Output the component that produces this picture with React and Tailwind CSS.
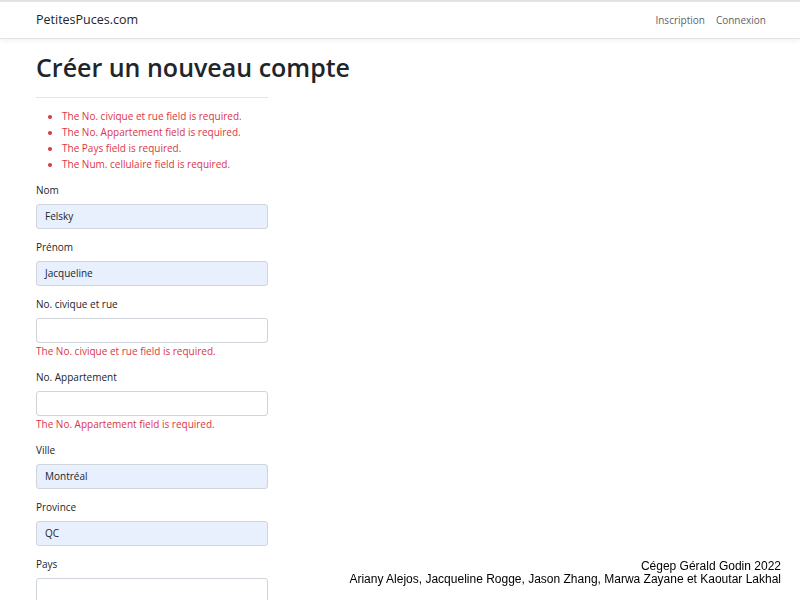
import React from 'react';

const errors = [
  'The No. civique et rue field is required.',
  'The No. Appartement field is required.',
  'The Pays field is required.',
  'The Num. cellulaire field is required.',
];

const fields = [
  { label: 'Nom', value: 'Felsky' },
  { label: 'Prénom', value: 'Jacqueline' },
  { label: 'No. civique et rue', value: '', error: 'The No. civique et rue field is required.' },
  { label: 'No. Appartement', value: '', error: 'The No. Appartement field is required.' },
  { label: 'Ville', value: 'Montréal' },
  { label: 'Province', value: 'QC' },
  { label: 'Pays', value: '' },
];

const Field = ({ label, value, error }) => (
  <div className="flex flex-col">
    <label className="text-[10px] leading-4 text-[#212529]">{label}</label>
    <div
      className={
        'mt-[6px] h-[25px] rounded-[3px] border border-[#ced4da] px-2 flex items-center text-[10px] text-[#212529] ' +
        (value ? 'bg-[#e8f0fe]' : 'bg-white')
      }
    >
      {value}
    </div>
    {error && <div className="text-[10px] leading-4 text-[#dc3545]">{error}</div>}
  </div>
);

export default function App() {
  return (
    <div className="min-h-[600px] bg-white font-['Open_Sans',sans-serif]">
      {/* Navbar */}
      <nav className="h-[39px] border-t-2 border-b border-[#e2e2e2] bg-white shadow-[0_2px_6px_rgba(0,0,0,0.05)] flex items-center justify-between pl-[36px] pr-[34px]">
        <span className="text-[12.5px] text-[#212529]">PetitesPuces.com</span>
        <div className="flex items-center gap-[11px] text-[10px] text-[#5c636a]">
          <span>Inscription</span>
          <span>Connexion</span>
        </div>
      </nav>

      {/* Content */}
      <main className="px-[36px]">
        <div className="w-[232px]">
          <h1 className="mt-[10px] text-[25px] leading-[36px] font-semibold text-[#212529] whitespace-nowrap">
            Créer un nouveau compte
          </h1>
          <hr className="mt-[12px] border-t border-[#e5e5e5]" />
          <ul className="mt-[10px] pl-[26px] list-disc text-[10px] leading-4 text-[#dc3545] marker:text-[#dc3545]">
            {errors.map((e) => (
              <li key={e}>{e}</li>
            ))}
          </ul>
          <div className="mt-[10px] flex flex-col gap-[10px]">
            {fields.map((f) => (
              <Field key={f.label} {...f} />
            ))}
          </div>
        </div>
      </main>

      {/* Footer */}
      <footer className="fixed right-[19px] bottom-[14px] text-right text-[12px] leading-[13px] text-black font-['Liberation_Sans',sans-serif]">
        <div>Cégep Gérald Godin 2022</div>
        <div>Ariany Alejos, Jacqueline Rogge, Jason Zhang, Marwa Zayane et Kaoutar Lakhal</div>
      </footer>
    </div>
  );
}
